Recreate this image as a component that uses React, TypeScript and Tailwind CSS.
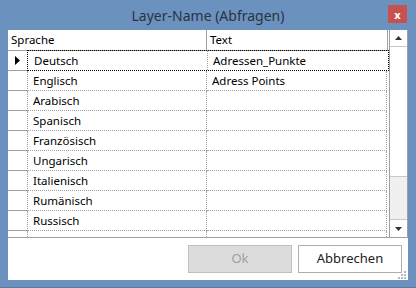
import React from 'react';

const rows = [
  { lang: 'Deutsch', text: 'Adressen_Punkte' },
  { lang: 'Englisch', text: 'Adress Points' },
  { lang: 'Arabisch', text: '' },
  { lang: 'Spanisch', text: '' },
  { lang: 'Französisch', text: '' },
  { lang: 'Ungarisch', text: '' },
  { lang: 'Italienisch', text: '' },
  { lang: 'Rumänisch', text: '' },
  { lang: 'Russisch', text: '' },
  { lang: 'Slowakisch', text: '' },
];

export default function App() {
  return (
    <div
      className="w-[416px] h-[288px] bg-[#6b92be] flex flex-col border-b border-[#557aa3]"
      style={{ fontFamily: '"Segoe UI", "Noto Sans", sans-serif' }}
    >
      {/* title bar */}
      <div className="h-[30px] shrink-0 flex items-center relative">
        <div className="w-full text-center text-[14px] text-[#2a3340] leading-none pt-[1px]">
          Layer-Name (Abfragen)
        </div>
        <button className="absolute left-[388px] top-[5px] w-[19px] h-[18px] bg-[#c75050] text-white text-[11px] font-bold leading-none flex items-center justify-center">
          x
        </button>
      </div>

      {/* client area */}
      <div className="mx-[8px] mb-[7px] flex-1 bg-white flex flex-col">
        <div className="h-[208px] shrink-0 flex border-b border-[#a0a0a0] overflow-hidden">
          {/* table */}
          <div className="flex-1 flex flex-col text-[11.5px] text-black overflow-hidden">
            <div className="h-[21px] shrink-0 flex border-b border-[#a0a0a0]">
              <div className="w-[199px] border-r border-[#a0a0a0] pl-[3px] flex items-center">Sprache</div>
              <div className="w-[181px] border-r border-[#a0a0a0] pl-[3px] flex items-center">Text</div>
            </div>
            {rows.map((r, i) => (
              <div key={r.lang} className="h-[20px] shrink-0 flex">
                <div className="w-[19px] shrink-0 border-b border-[#a0a0a0] flex items-center justify-center">
                  {i === 0 && (
                    <svg width="6" height="9" viewBox="0 0 6 9" className="ml-[1px]">
                      <path d="M0 0 L5 4.5 L0 9 Z" fill="#000" />
                    </svg>
                  )}
                </div>
                <div
                  className={
                    i === 0
                      ? 'flex flex-1 border border-dotted border-black -mt-[1px] h-[21px]'
                      : 'flex flex-1'
                  }
                >
                  <div
                    className={
                      'w-[180px] shrink-0 pl-[5px] flex items-center border-l border-r border-dotted ' +
                      (i === 0 ? 'border-l-transparent border-r-[#a0a0a0]' : 'border-b border-[#a0a0a0]')
                    }
                  >
                    {r.lang}
                  </div>
                  <div
                    className={
                      'w-[180px] shrink-0 pl-[5px] flex items-center border-dotted ' +
                      (i === 0 ? '' : 'border-r border-b border-[#a0a0a0]')
                    }
                  >
                    {r.text}
                  </div>
                </div>
              </div>
            ))}
          </div>

          {/* scrollbar */}
          <div className="w-[19px] shrink-0 flex flex-col bg-[#f0f0f0] border-l border-r border-[#a0a0a0]">
            <div className="h-[17px] shrink-0 bg-white border-b border-[#c8c8c8] flex items-center justify-center">
              <svg width="7" height="4" viewBox="0 0 7 4">
                <path d="M0 4 L3.5 0 L7 4 Z" fill="#333" />
              </svg>
            </div>
            <div className="h-[130px] shrink-0 bg-white border-b border-[#c8c8c8]" />
            <div className="flex-1" />
            <div className="h-[18px] shrink-0 bg-white border-t border-[#c8c8c8] flex items-center justify-center">
              <svg width="7" height="4" viewBox="0 0 7 4">
                <path d="M0 0 L7 0 L3.5 4 Z" fill="#333" />
              </svg>
            </div>
          </div>
        </div>

        {/* buttons */}
        <div className="flex-1 flex justify-end items-start pt-[7px] pr-[6px] gap-[6px] relative">
          <button className="w-[104px] h-[28px] bg-[#dcdcdc] border border-[#bfbfbf] text-[13px] text-[#a0a0a0]">
            Ok
          </button>
          <button className="w-[104px] h-[28px] bg-white border border-[#adadad] text-[13px] text-[#222]">
            Abbrechen
          </button>
          <svg width="8" height="8" viewBox="0 0 8 8" className="absolute right-[2px] bottom-[1px]">
            <rect x="6" y="0" width="2" height="2" fill="#b8b8b8" />
            <rect x="3" y="3" width="2" height="2" fill="#b8b8b8" />
            <rect x="6" y="3" width="2" height="2" fill="#b8b8b8" />
            <rect x="0" y="6" width="2" height="2" fill="#b8b8b8" />
            <rect x="3" y="6" width="2" height="2" fill="#b8b8b8" />
            <rect x="6" y="6" width="2" height="2" fill="#b8b8b8" />
          </svg>
        </div>
      </div>
    </div>
  );
}
